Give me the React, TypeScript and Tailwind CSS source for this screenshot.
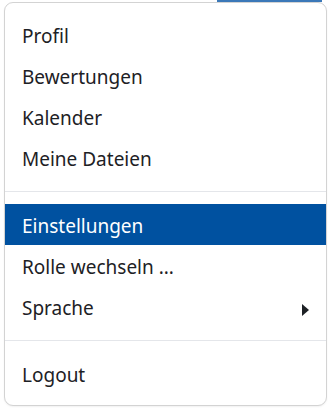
import { ReactNode } from 'react';

/* Account dropdown menu — list of links, dividers, one active row, and a submenu caret. */

function Item({ children, active, caret }: { children: ReactNode; active?: boolean; caret?: boolean }) {
  return (
    <div
      className={
        'flex h-[41px] items-center justify-between pl-[17px] pr-[17px] pt-[3px] ' +
        (active ? 'bg-[#0051a0] text-white' : 'text-[#1d2125]')
      }
    >
      <span>{children}</span>
      {caret && (
        <svg width="7" height="12" viewBox="0 0 7 12" className="mt-[4px] block shrink-0">
          <path d="M0 0 L7 6 L0 12 Z" fill="#1d2125" />
        </svg>
      )}
    </div>
  );
}

function Divider() {
  return <div className="mb-[12px] mt-[13px] h-px bg-[#e4e6ea]" />;
}

export default function App() {
  return (
    <div className="h-[411px] w-[332px] bg-white" style={{ fontFamily: '"Noto Sans", sans-serif' }}>
      <div className="ml-[217px] h-[2px] w-[105px] bg-[#3b78b8]" />
      <div className="ml-[4px] w-[323px] rounded-[9px] border border-[#d3d3d3] bg-white py-[11px] text-[19px] shadow-[0_1px_2px_rgba(0,0,0,0.06)]">
        <Item>Profil</Item>
        <Item>Bewertungen</Item>
        <Item>Kalender</Item>
        <Item>Meine Dateien</Item>
        <Divider />
        <Item active>Einstellungen</Item>
        <Item>Rolle wechseln ...</Item>
        <Item caret>Sprache</Item>
        <Divider />
        <Item>Logout</Item>
      </div>
    </div>
  );
}
